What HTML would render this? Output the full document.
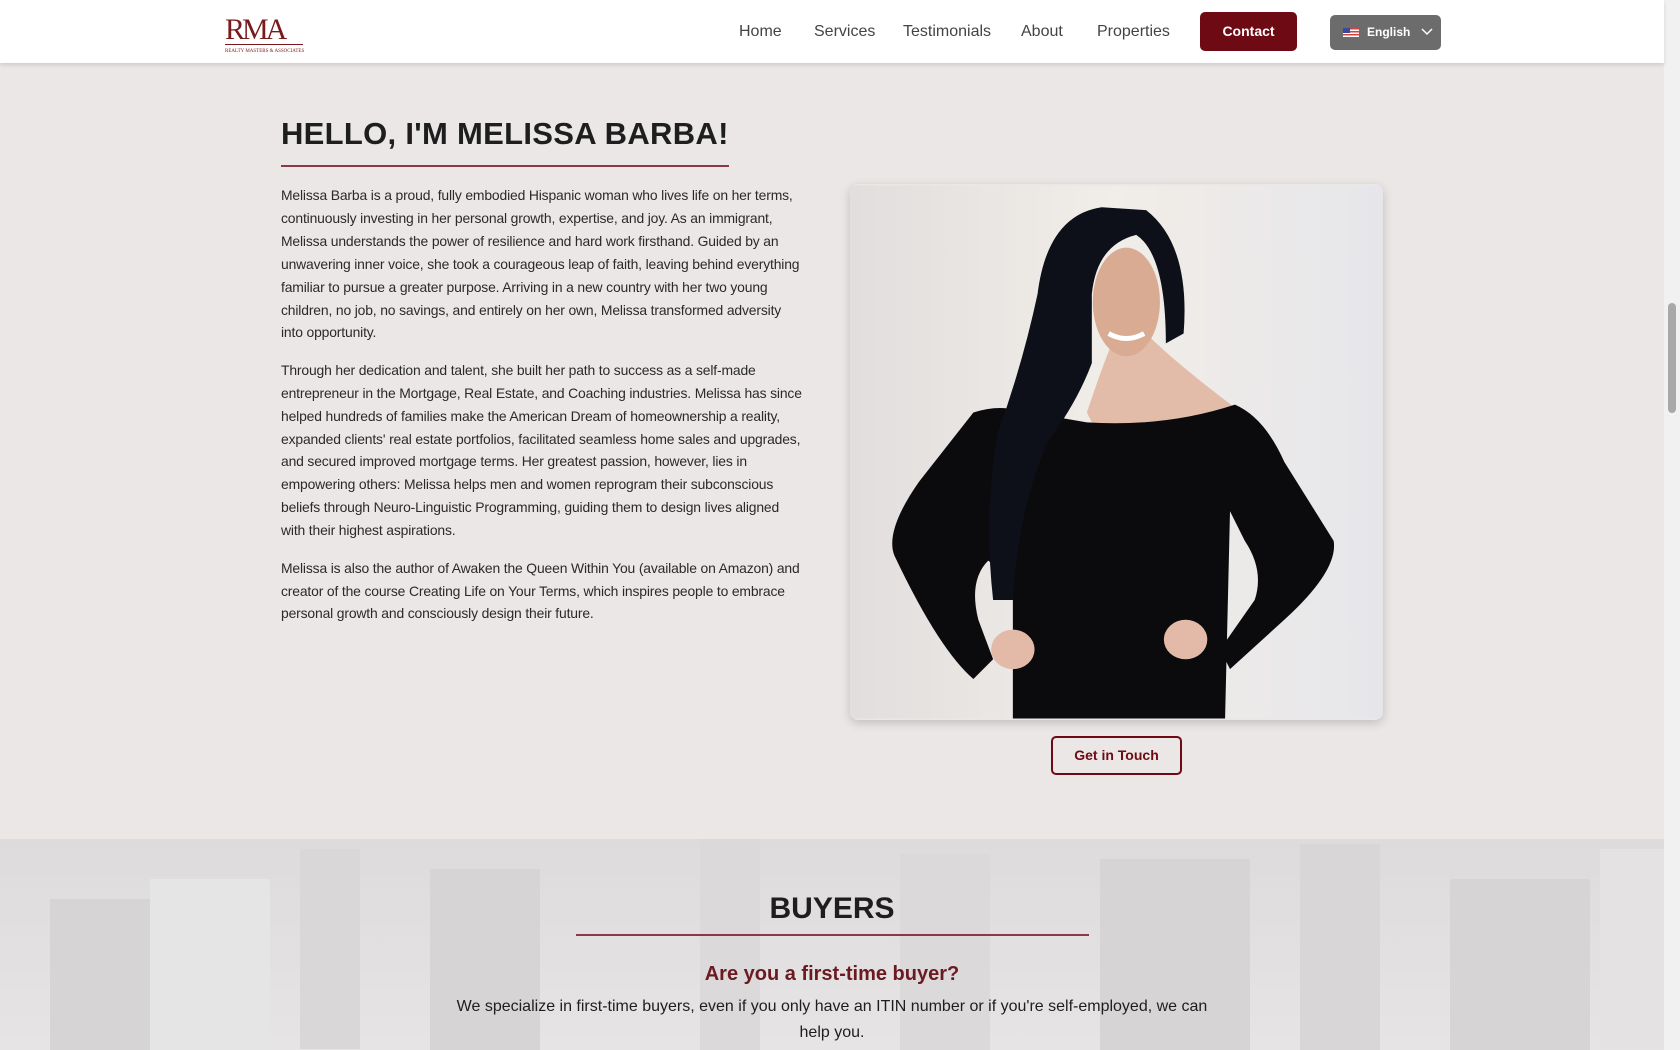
<!DOCTYPE html>
<html><head><meta charset="utf-8"><style>
*{margin:0;padding:0;box-sizing:border-box}
body{width:1680px;height:1050px;overflow:hidden;background:#ebe7e6;font-family:"Liberation Sans",sans-serif;position:relative}
.nav{position:absolute;left:0;top:0;width:1664px;height:63px;background:#fff;box-shadow:0 2px 4px rgba(0,0,0,.12);z-index:2}
.nav a{position:absolute;top:23px;font-size:16px;color:#444;text-decoration:none}
.contact{position:absolute;left:1200px;top:12px;width:97px;height:39px;background:#6e0a14;border-radius:5px;color:#fff;font-weight:bold;font-size:14px;text-align:center;line-height:39px}
.lang{position:absolute;left:1330px;top:15px;width:111px;height:35px;background:#6c6c6c;border-radius:5px;color:#fff;font-weight:bold;font-size:12px;line-height:35px;padding-left:37px}
.scroll{position:absolute;left:1664px;top:0;width:16px;height:1050px;background:#f1f1f1}
.thumb{position:absolute;left:1668px;top:303px;width:8px;height:110px;background:#a8a8a8;border-radius:4px}
h1{position:absolute;left:281px;top:116px;font-size:31px;font-weight:bold;color:#1e1e1e;letter-spacing:.3px}
.ul1{position:absolute;left:281px;top:165px;width:448px;height:2px;background:#8a3a44}
.txt{position:absolute;left:281px;top:184px;width:525px;font-size:13.9px;letter-spacing:-0.15px;line-height:22.9px;color:#2a2a2a}
.txt p{margin-bottom:14.5px}
.photo{position:absolute;left:850px;top:184px;width:533px;height:536px;border-radius:8px;overflow:hidden;box-shadow:0 3px 10px rgba(0,0,0,.18)}
.btn{position:absolute;left:1051px;top:736px;width:131px;height:39px;border:2px solid #6e0a14;border-radius:5px;color:#6e0a14;font-size:14px;font-weight:bold;text-align:center;line-height:35px;background:transparent}
.city{position:absolute;left:0;top:839px;width:1664px;height:211px;background:linear-gradient(#dddbdb,#e6e4e4);overflow:hidden}
.city div{position:absolute;background:#d6d4d4}
.c2{position:absolute;left:0;top:839px;width:1664px;text-align:center}
</style></head><body>
<div class="nav">
<svg style="position:absolute;left:224px;top:12px" width="82" height="42" viewBox="0 0 82 42">
<text x="1" y="27" font-family="Liberation Serif" font-size="30" fill="#7a1a1f" letter-spacing="-3">RMA</text>
<rect x="1" y="32" width="78" height="1" fill="#7a1a1f"/>
<text x="1" y="40" font-family="Liberation Serif" font-size="5" fill="#7a1a1f">REALTY MASTERS &amp; ASSOCIATES</text></svg>
<a style="left:739px">Home</a><a style="left:814px">Services</a><a style="left:903px">Testimonials</a><a style="left:1021px">About</a><a style="left:1097px">Properties</a>
<div class="contact">Contact</div>
<div class="lang"><span style="position:absolute;left:13px;top:13px;width:16px;height:10px;background:repeating-linear-gradient(#c44 0 1.5px,#fff 1.5px 3px)"><span style="position:absolute;left:0;top:0;width:7px;height:5px;background:#3a4a9a"></span></span>English<svg style="position:absolute;left:91px;top:12px" width="12" height="10"><path d="M1 2l5 5 5-5" stroke="#fff" stroke-width="1.5" fill="none"/></svg></div>
</div>
<div class="scroll"></div><div class="thumb"></div>
<h1>HELLO, I'M MELISSA BARBA!</h1><div class="ul1"></div>
<div class="txt">
<p>Melissa Barba is a proud, fully embodied Hispanic woman who lives life on her terms, continuously investing in her personal growth, expertise, and joy. As an immigrant, Melissa understands the power of resilience and hard work firsthand. Guided by an unwavering inner voice, she took a courageous leap of faith, leaving behind everything familiar to pursue a greater purpose. Arriving in a new country with her two young children, no job, no savings, and entirely on her own, Melissa transformed adversity into opportunity.</p>
<p>Through her dedication and talent, she built her path to success as a self-made entrepreneur in the Mortgage, Real Estate, and Coaching industries. Melissa has since helped hundreds of families make the American Dream of homeownership a reality, expanded clients' real estate portfolios, facilitated seamless home sales and upgrades, and secured improved mortgage terms. Her greatest passion, however, lies in empowering others: Melissa helps men and women reprogram their subconscious beliefs through Neuro-Linguistic Programming, guiding them to design lives aligned with their highest aspirations.</p>
<p>Melissa is also the author of Awaken the Queen Within You (available on Amazon) and creator of the course Creating Life on Your Terms, which inspires people to embrace personal growth and consciously design their future.</p>
</div>
<div class="photo"><svg width="533" height="536" viewBox="0 0 540 540">
<defs><linearGradient id="bg" x1="0" x2="1"><stop offset="0" stop-color="#e2dede"/><stop offset=".5" stop-color="#f1ede8"/><stop offset="1" stop-color="#e6e6ea"/></linearGradient></defs>
<rect width="540" height="540" fill="url(#bg)"/>
<path d="M240 230 Q260 170 270 150 L300 150 Q330 180 390 225 L380 250 L250 250Z" fill="#e2bca8"/>
<path d="M125 230 Q150 222 170 228 L240 240 Q320 245 390 222 Q420 235 440 280 L490 360 Q495 390 440 440 L385 490 L375 470 L410 420 Q420 390 400 360 L385 330 L380 540 L165 540 L165 420 Q155 390 140 380 Q120 400 130 440 L145 480 L125 500 Q90 470 45 375 Q35 350 70 300 Z" fill="#0b0b0e"/>
<path d="M255 22 Q200 30 190 110 Q175 180 150 250 Q135 330 145 420 L165 420 Q170 330 200 260 Q230 220 245 180 L245 110 Q250 60 290 50 Q320 70 320 160 L338 150 Q345 60 300 25Z" fill="#0d1018"/>
<ellipse cx="280" cy="118" rx="34" ry="55" fill="#d9ab92"/>
<path d="M262 150 Q280 160 298 150" stroke="#fff" stroke-width="5" fill="none"/>
<ellipse cx="165" cy="470" rx="22" ry="20" fill="#e3b9a8"/><ellipse cx="340" cy="460" rx="22" ry="20" fill="#e3b9a8"/>
</svg></div>
<div class="btn">Get in Touch</div>
<div class="city">
<div style="left:50px;top:60px;width:100px;height:160px"></div><div style="left:150px;top:40px;width:120px;height:180px;background:#e6e5e5"></div>
<div style="left:300px;top:10px;width:60px;height:200px;background:#d9d7d7"></div><div style="left:430px;top:30px;width:110px;height:190px"></div>
<div style="left:1100px;top:20px;width:150px;height:200px"></div><div style="left:1300px;top:5px;width:80px;height:210px;background:#d8d6d6"></div>
<div style="left:1450px;top:40px;width:140px;height:180px"></div><div style="left:1600px;top:10px;width:64px;height:200px;background:#e4e2e2"></div>
<div style="left:700px;top:0;width:60px;height:211px;background:#dbd9d9"></div><div style="left:900px;top:15px;width:90px;height:200px;background:#dbd9d9"></div>
</div>
<div class="c2">
<div style="margin-top:53px;font-size:30px;font-weight:bold;color:#1e1e1e">BUYERS</div>
<div style="width:513px;height:2px;background:#8a3a44;margin:8px auto 0"></div>
<div style="margin-top:27px;font-size:20px;font-weight:bold;color:#6b1a22">Are you a first-time buyer?</div>
<div style="width:780px;margin:8px auto 0;font-size:16px;line-height:26px;color:#1e1e1e">We specialize in first-time buyers, even if you only have an ITIN number or if you're self-employed, we can help you.</div>
</div>
</body></html>
